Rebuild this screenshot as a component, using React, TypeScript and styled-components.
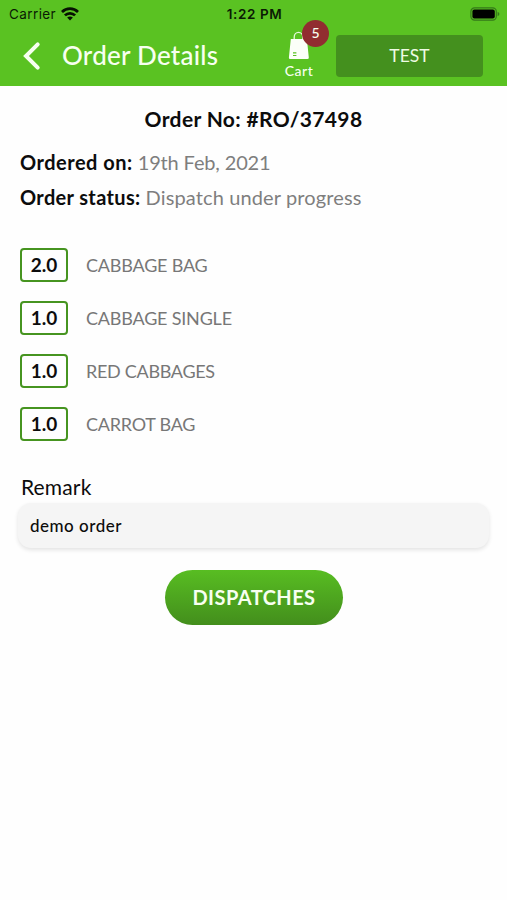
import React from "react";
import styled, { createGlobalStyle } from "styled-components";

const GlobalStyle = createGlobalStyle`
  * { box-sizing: border-box; }
  body { margin: 0; background: #fefefe; }
`;

const Screen = styled.div`
  width: 507px;
  height: 900px;
  overflow: hidden;
  background: #fefefe;
  color: #0c0c0c;
  font-family: Lato, "Open Sans", sans-serif;
`;

const Header = styled.header`
  height: 86px;
  background: #5ac222;
`;

const StatusBar = styled.div`
  height: 27px;
  display: grid;
  grid-template-columns: 1fr auto 1fr;
  align-items: center;
  padding: 0 7px 0 9px;
  color: #0a1a04;
  font-family: Inter, sans-serif;
  font-size: 13.5px;
  line-height: 28px;
`;

const Carrier = styled.div`
  display: flex;
  align-items: center;
  gap: 5px;
  letter-spacing: 0.4px;
`;

const Clock = styled.div`
  font-weight: 600;
  letter-spacing: 0.6px;
`;

const BatterySlot = styled.div`
  display: flex;
  justify-content: flex-end;
`;

const NavBar = styled.div`
  height: 59px;
  display: flex;
  align-items: flex-start;
  padding-left: 22px;
  color: #f7fff0;
`;

const BackButton = styled.button`
  display: block;
  width: 20px;
  height: 30px;
  margin-top: 14px;
  padding: 0;
  border: 0;
  background: none;
`;

const Title = styled.h1`
  width: 223px;
  margin: 12px 0 0 20px;
  font-size: 26px;
  font-weight: 500;
  line-height: 33px;
  letter-spacing: 0.25px;
  white-space: nowrap;
`;

const Cart = styled.div`
  position: relative;
  width: 28px;
  padding-top: 4px;
  display: flex;
  flex-direction: column;
  align-items: center;
  gap: 2px;
  font-size: 14px;
  font-weight: 500;
  line-height: 18px;
  letter-spacing: 0.5px;
  white-space: nowrap;
`;

const CartBadge = styled.span`
  position: absolute;
  left: 17px;
  top: -7px;
  width: 27px;
  height: 27px;
  border-radius: 50%;
  background: #912d30;
  text-align: center;
  line-height: 26px;
  letter-spacing: 0;
`;

const AccountButton = styled.button`
  width: 147px;
  height: 42px;
  margin: 8px 0 0 23px;
  padding: 0;
  border: 0;
  border-radius: 4px;
  background: #44901e;
  color: #eefbe4;
  font: 400 17.5px/42px Lato, sans-serif;
`;

const Content = styled.main`
  display: flex;
  flex-direction: column;
  padding: 19px 18px 0;
`;

const OrderNumber = styled.h2`
  margin: 0;
  text-align: center;
  font-size: 21px;
  font-weight: 700;
  line-height: 28px;
  letter-spacing: 0.35px;
`;

const Facts = styled.dl`
  margin: 12px 0 0 2px;
`;

const Fact = styled.div`
  display: flex;
  gap: 5px;
  height: 35px;
  line-height: 35px;
  font-size: 20px;
`;

const FactName = styled.dt<{ $track: number }>`
  font-weight: 700;
  letter-spacing: ${(p) => p.$track}px;
`;

const FactValue = styled.dd<{ $track: number }>`
  margin: 0;
  color: #7e7e7e;
  letter-spacing: ${(p) => p.$track}px;
`;

const Items = styled.ul`
  display: flex;
  flex-direction: column;
  gap: 19px;
  margin: 33px 0 0 2px;
  padding: 0;
  list-style: none;
`;

const Item = styled.li`
  display: flex;
  align-items: center;
  gap: 18px;
  height: 34px;
`;

const Quantity = styled.span`
  width: 48px;
  height: 34px;
  border: 2.5px solid #469420;
  border-radius: 4px;
  text-align: center;
  font-size: 19px;
  font-weight: 700;
  line-height: 30px;
`;

const ItemName = styled.span<{ $track: number }>`
  color: #777;
  font-size: 18px;
  letter-spacing: ${(p) => p.$track}px;
`;

const RemarkLabel = styled.label`
  margin: 32px 0 0 3px;
  font-size: 21px;
  line-height: 28px;
  letter-spacing: 0.15px;
`;

const RemarkBox = styled.div`
  height: 45px;
  margin-top: 2px;
  padding-left: 12px;
  border-radius: 13px;
  background: #f5f5f5;
  box-shadow: 0 2px 4px rgba(0, 0, 0, 0.11);
  font-size: 17px;
  font-weight: 500;
  line-height: 45px;
  letter-spacing: 0.5px;
`;

const DispatchButton = styled.button`
  align-self: center;
  width: 178px;
  height: 55px;
  margin: 22px 0 0 1px;
  padding: 0;
  border: 0;
  border-radius: 28px;
  background: linear-gradient(#58bd22, #438e1c);
  color: #f7fff0;
  font: 700 20px/55px Lato, sans-serif;
  letter-spacing: 0.45px;
`;

const items = [
  { quantity: "2.0", name: "CABBAGE BAG", track: -0.2 },
  { quantity: "1.0", name: "CABBAGE SINGLE", track: -0.2 },
  { quantity: "1.0", name: "RED CABBAGES", track: -0.3 },
  { quantity: "1.0", name: "CARROT BAG", track: -0.25 },
];

function WifiIcon() {
  return (
    <svg width="18" height="14" viewBox="0 0 18 14" fill="none" stroke="#061202" strokeWidth="2.7">
      <path d="M1 5 A11.3 11.3 0 0 1 17 5" />
      <path d="M3.9 8.4 A7.2 7.2 0 0 1 14.1 8.4" />
      <path d="M6.1 10.6 Q9 8.2 11.9 10.6 L9 13.6Z" fill="#061202" stroke="none" />
    </svg>
  );
}

function BatteryIcon() {
  return (
    <svg width="30" height="14" viewBox="0 0 30 14">
      <rect x="0.9" y="0.9" width="25.4" height="12.2" rx="3.6" fill="none" stroke="#35781a" strokeWidth="1.2" />
      <rect x="2.4" y="2.4" width="22.4" height="9.2" rx="2" fill="#000" />
      <path d="M27.6 4.8 Q29.4 5.5 29.4 7 Q29.4 8.5 27.6 9.2Z" fill="#35781a" />
    </svg>
  );
}

function BackIcon() {
  return (
    <svg width="20" height="30" viewBox="0 0 20 30" fill="none" stroke="#f7fff0" strokeWidth="4" strokeLinecap="round">
      <path d="M15.7 3.4 L4 15 L15.7 26.6" />
    </svg>
  );
}

function BagIcon() {
  return (
    <svg width="22" height="29" viewBox="0 0 22 29">
      <path d="M6.2 10 V6.2 A4.3 4.9 0 0 1 14.8 6.2 V10" fill="none" stroke="#e6f9da" strokeWidth="1.3" />
      <path d="M2.8 8 H18.9 L20.8 26.4 Q20.9 28 19.3 28 H2.2 Q0.7 28 0.9 26.4Z" fill="#fbfff8" />
      <path d="M5 21.8 H8.4 M5 24.5 H8.4" stroke="#5ac222" strokeWidth="1.2" />
    </svg>
  );
}

export default function App() {
  return (
    <Screen>
      <GlobalStyle />
      <Header>
        <StatusBar>
          <Carrier>
            <span>Carrier</span>
            <WifiIcon />
          </Carrier>
          <Clock>1:22 PM</Clock>
          <BatterySlot>
            <BatteryIcon />
          </BatterySlot>
        </StatusBar>
        <NavBar>
          <BackButton aria-label="Back">
            <BackIcon />
          </BackButton>
          <Title>Order Details</Title>
          <Cart>
            <BagIcon />
            <span>Cart</span>
            <CartBadge>5</CartBadge>
          </Cart>
          <AccountButton>TEST</AccountButton>
        </NavBar>
      </Header>
      <Content>
        <OrderNumber>Order No: #RO/37498</OrderNumber>
        <Facts>
          <Fact>
            <FactName $track={0.5}>Ordered on:</FactName>
            <FactValue $track={-0.15}>19th Feb, 2021</FactValue>
          </Fact>
          <Fact>
            <FactName $track={0.35}>Order status:</FactName>
            <FactValue $track={0.13}>Dispatch under progress</FactValue>
          </Fact>
        </Facts>
        <Items>
          {items.map((item) => (
            <Item key={item.name}>
              <Quantity>{item.quantity}</Quantity>
              <ItemName $track={item.track}>{item.name}</ItemName>
            </Item>
          ))}
        </Items>
        <RemarkLabel>Remark</RemarkLabel>
        <RemarkBox>demo order</RemarkBox>
        <DispatchButton>DISPATCHES</DispatchButton>
      </Content>
    </Screen>
  );
}
